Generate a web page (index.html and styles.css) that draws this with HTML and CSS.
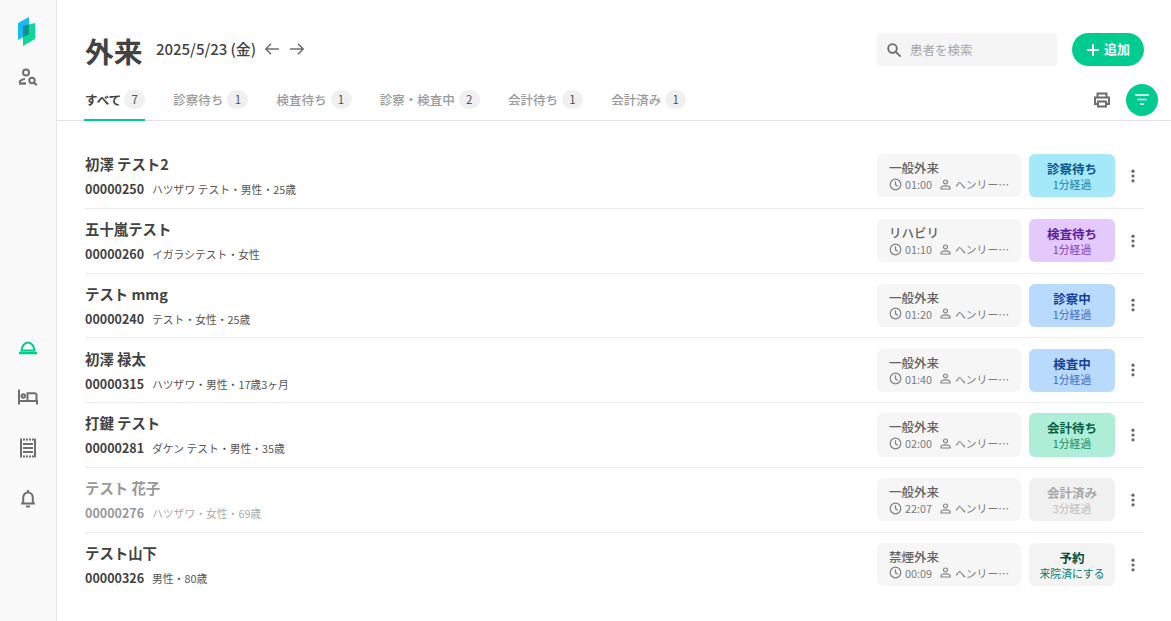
FILE: index.html
```html
<!DOCTYPE html>
<html lang="ja">
<head>
<meta charset="utf-8">
<title>外来</title>
<link rel="stylesheet" href="styles.css">
</head>
<body>
<svg width="0" height="0" class="defs">
  <defs>
    <symbol id="clock" viewBox="0 0 13 13"><circle cx="6.500" cy="6.500" r="5.300" fill="none" stroke="currentColor" stroke-width="1.200"/><path d="M6.500 3.300v3.500l2.400 1.400" fill="none" stroke="currentColor" stroke-width="1.200"/></symbol>
    <symbol id="person" viewBox="0 0 13 13"><circle cx="6.500" cy="4" r="2" fill="none" stroke="currentColor" stroke-width="1.200"/><path d="M2 11V9.900c0-1.300 2.500-2 4.500-2s4.500.7 4.500 2V11z" fill="none" stroke="currentColor" stroke-width="1.200"/></symbol>
    <symbol id="dots" viewBox="0 0 4 14"><circle cx="2" cy="2.200" r="1.600"/><circle cx="2" cy="7" r="1.600"/><circle cx="2" cy="11.800" r="1.600"/></symbol>
  </defs>
</svg>
<div class="app">
  <aside class="side">
    <svg class="logo" width="20" height="30" viewBox="0 0 20 30">
      <path d="M1 6 12 0v17L1 23z" fill="#18b9f5"/>
      <path d="M6 9 18 6v16L6 29z" fill="#0fd69b"/>
      <path d="M6 9 12 7.500V17L6 20.300z" fill="#0c9487"/>
    </svg>
    <svg class="nav-icon" width="20" height="20" viewBox="0 0 20 20" fill="none" stroke="#6f6f6f" stroke-width="2">
      <circle cx="8" cy="5.500" r="3"/>
      <path d="M1.500 15.500c0-1.800 3-3.300 5.500-3.500"/>
      <path d="M1 16.500h7" stroke-width="2.400"/>
      <circle cx="14" cy="13.500" r="2.700"/>
      <path d="m16 15.500 2.700 2.700"/>
    </svg>
    <div class="side-bottom">
      <svg class="nav-icon" width="20" height="20" viewBox="0 0 20 20" fill="none" stroke="#00cc90" stroke-width="2">
        <path d="M3.500 13.500c.4-4.400 3-8 6.500-8s6.100 3.600 6.500 8z"/>
        <path d="M1 16h18" stroke-width="2.600"/>
      </svg>
      <svg class="nav-icon" width="20" height="20" viewBox="0 0 20 20" fill="none" stroke="#6f6f6f" stroke-width="2">
        <path d="M1 2.500v15M1 14h18v3.500M18.500 14V8a1.800 1.800 0 0 0-1.800-1.800H9.500V14"/>
        <circle cx="5.300" cy="9" r="1.700"/>
      </svg>
      <svg class="nav-icon" width="20" height="20" viewBox="0 0 20 20" fill="none" stroke="#6f6f6f" stroke-width="2">
        <path d="M3 1v18M17 1v18"/>
        <path d="M2 1.500h16M2 18.500h16" stroke-dasharray="2 1"/>
        <path d="M5 6h10M5 10h10M5 14h10"/>
      </svg>
      <svg class="nav-icon" width="20" height="20" viewBox="0 0 20 20" fill="none" stroke="#6f6f6f" stroke-width="2">
        <path d="M3 15.500h14M5.200 15.500V9.500c0-2.800 1.900-4.900 4.800-4.900s4.800 2.100 4.800 4.900v6M10 2v2.600"/>
        <path d="M8 18.500h4"/>
      </svg>
    </div>
  </aside>
  <main class="main">
    <header class="top">
      <h1 class="title">外来</h1>
      <span class="date">2025/5/23 (金)</span>
      <svg class="arrow" width="16" height="16" viewBox="0 0 16 16" fill="none" stroke="#6f6f6f" stroke-width="1.500"><path d="M15 8H2M7 2.800 1.800 8 7 13.200"/></svg>
      <svg class="arrow" width="16" height="16" viewBox="0 0 16 16" fill="none" stroke="#6f6f6f" stroke-width="1.500"><path d="M1 8h13M9 2.800 14.200 8 9 13.200"/></svg>
      <div class="search">
        <svg width="16" height="16" viewBox="0 0 16 16" fill="none" stroke="#6a6a6a" stroke-width="1.800"><circle cx="6.500" cy="6.500" r="4.300"/><path d="m9.800 9.800 4.800 4.800"/></svg>
        <span class="placeholder">患者を検索</span>
      </div>
      <button class="add"><svg width="14" height="14" viewBox="0 0 14 14" stroke="#fff" stroke-width="2"><path d="M7 1v12M1 7h12"/></svg><span class="add-label">追加</span></button>
    </header>
    <nav class="tabs">
      <a class="tab active">すべて<span class="count">7</span></a>
      <a class="tab">診察待ち<span class="count">1</span></a>
      <a class="tab">検査待ち<span class="count">1</span></a>
      <a class="tab">診察・検査中<span class="count">2</span></a>
      <a class="tab">会計待ち<span class="count">1</span></a>
      <a class="tab">会計済み<span class="count">1</span></a>
      <div class="tab-tools">
        <svg width="18" height="18" viewBox="0 0 18 18" fill="none" stroke="#6a6a6a" stroke-width="1.900"><path d="M4.500 6V2.500h9V6M4.500 13H2V6.500h14V13h-2.500"/><path d="M5 10.500h8v5H5z"/></svg>
        <button class="filter"><svg width="14" height="11" viewBox="0 0 14 11" stroke="#fff" stroke-width="1.700"><path d="M0 1h14M2.500 5.500h9M5 10h4"/></svg></button>
      </div>
    </nav>
    <section class="list">
      <article class="row">
        <div class="who"><div class="name">初澤 テスト2</div><div class="meta"><b>00000250</b><span>ハツザワ テスト・男性・25歳</span></div></div>
        <div class="visit"><div class="visit-name">一般外来</div><div class="visit-info"><svg class="ic"><use href="#clock"/></svg><span class="time">01:00</span><svg class="ic"><use href="#person"/></svg><span>ヘンリー…</span></div></div>
        <div class="status s-exam"><strong>診察待ち</strong><small>1分経過</small></div>
        <svg class="dots"><use href="#dots"/></svg>
      </article>
      <article class="row">
        <div class="who"><div class="name">五十嵐テスト</div><div class="meta"><b>00000260</b><span>イガラシテスト・女性</span></div></div>
        <div class="visit"><div class="visit-name">リハビリ</div><div class="visit-info"><svg class="ic"><use href="#clock"/></svg><span class="time">01:10</span><svg class="ic"><use href="#person"/></svg><span>ヘンリー…</span></div></div>
        <div class="status s-test"><strong>検査待ち</strong><small>1分経過</small></div>
        <svg class="dots"><use href="#dots"/></svg>
      </article>
      <article class="row">
        <div class="who"><div class="name">テスト mmg</div><div class="meta"><b>00000240</b><span>テスト・女性・25歳</span></div></div>
        <div class="visit"><div class="visit-name">一般外来</div><div class="visit-info"><svg class="ic"><use href="#clock"/></svg><span class="time">01:20</span><svg class="ic"><use href="#person"/></svg><span>ヘンリー…</span></div></div>
        <div class="status s-busy"><strong>診察中</strong><small>1分経過</small></div>
        <svg class="dots"><use href="#dots"/></svg>
      </article>
      <article class="row">
        <div class="who"><div class="name">初澤 禄太</div><div class="meta"><b>00000315</b><span>ハツザワ・男性・17歳3ヶ月</span></div></div>
        <div class="visit"><div class="visit-name">一般外来</div><div class="visit-info"><svg class="ic"><use href="#clock"/></svg><span class="time">01:40</span><svg class="ic"><use href="#person"/></svg><span>ヘンリー…</span></div></div>
        <div class="status s-busy"><strong>検査中</strong><small>1分経過</small></div>
        <svg class="dots"><use href="#dots"/></svg>
      </article>
      <article class="row">
        <div class="who"><div class="name">打鍵 テスト</div><div class="meta"><b>00000281</b><span>ダケン テスト・男性・35歳</span></div></div>
        <div class="visit"><div class="visit-name">一般外来</div><div class="visit-info"><svg class="ic"><use href="#clock"/></svg><span class="time">02:00</span><svg class="ic"><use href="#person"/></svg><span>ヘンリー…</span></div></div>
        <div class="status s-pay"><strong>会計待ち</strong><small>1分経過</small></div>
        <svg class="dots"><use href="#dots"/></svg>
      </article>
      <article class="row done">
        <div class="who"><div class="name">テスト 花子</div><div class="meta"><b>00000276</b><span>ハツザワ・女性・69歳</span></div></div>
        <div class="visit"><div class="visit-name">一般外来</div><div class="visit-info"><svg class="ic"><use href="#clock"/></svg><span class="time">22:07</span><svg class="ic"><use href="#person"/></svg><span>ヘンリー…</span></div></div>
        <div class="status s-done"><strong>会計済み</strong><small>3分経過</small></div>
        <svg class="dots"><use href="#dots"/></svg>
      </article>
      <article class="row">
        <div class="who"><div class="name">テスト山下</div><div class="meta"><b>00000326</b><span>男性・80歳</span></div></div>
        <div class="visit"><div class="visit-name">禁煙外来</div><div class="visit-info"><svg class="ic"><use href="#clock"/></svg><span class="time">00:09</span><svg class="ic"><use href="#person"/></svg><span>ヘンリー…</span></div></div>
        <div class="status s-resv"><strong>予約</strong><small>来院済にする</small></div>
        <svg class="dots"><use href="#dots"/></svg>
      </article>
    </section>
  </main>
</div>
</body>
</html>
```
FILE: styles.css
```css
* { box-sizing: border-box; }
html, body { margin: 0; height: 100%; overflow: hidden; }
body {
  font-family: "Noto Sans CJK JP", "Noto Sans", sans-serif;
  color: #424242;
  background: #fff;
}
.defs { position: absolute; }
.app { display: flex; height: 621px; }

.side {
  width: 57px;
  flex: none;
  background: #f9f9f9;
  border-right: 1px solid #e6e6e6;
  display: flex;
  flex-direction: column;
  align-items: center;
  padding-top: 17px;
}
.logo { margin-right: 2px; }
.nav-icon { display: block; }
.logo + .nav-icon { margin-top: 20px; margin-right: 1px; }
.side-bottom {
  margin-top: 250px;
  display: flex;
  flex-direction: column;
  align-items: center;
  gap: 30.300px;
  margin-right: 1px;
}

.main { flex: 1; min-width: 0; }
.top {
  display: flex;
  align-items: center;
  height: 33px;
  margin: 33px 27px 0 28px;
}
.title { margin: 1px 13.500px 0 0; font-size: 28.800px; font-weight: 700; line-height: 33px; color: #424242; }
.date { font-size: 15px; font-weight: 500; margin: 0 8px 2px 0; white-space: nowrap; letter-spacing: -.05px; }
.arrow { margin: 0 9px 2px 0; }
.search {
  margin-left: auto;
  width: 180px;
  height: 33px;
  background: #f5f5f5;
  border-radius: 4px;
  display: flex;
  align-items: center;
  gap: 8px;
  padding-left: 9px;
}
.placeholder { font-size: 12.500px; color: #a6a6a6; padding-bottom: 1px; }
.add {
  margin-left: 15px;
  width: 72px;
  height: 33px;
  border: 0;
  border-radius: 17px;
  background: #00cc90;
  color: #fff;
  font: 700 13px "Noto Sans CJK JP", sans-serif;
  display: flex;
  align-items: center;
  justify-content: center;
  gap: 4px;
  padding: 0;
}
.add-label { padding-bottom: 2px; }

.tabs {
  display: flex;
  align-items: stretch;
  height: 39px;
  margin-top: 16px;
  padding: 0 13px 0 28px;
  border-bottom: 1px solid #e2e2e2;
}
.tab {
  display: flex;
  align-items: center;
  gap: 4px;
  font-size: 12.500px;
  font-weight: 500;
  color: #9a9a9a;
  margin-right: 28.200px;
  padding-bottom: 4px;
  white-space: nowrap;
}
.tab.active { color: #424242; font-weight: 700; gap: 3px; border-bottom: 2px solid #00cc90; margin-bottom: -1px; padding-bottom: 3px; margin-left: -1px; padding-left: 1px; }
.count {
  width: 21px;
  height: 19px;
  border-radius: 10px;
  background: #f0f0f0;
  color: #505060;
  font-size: 11.500px;
  font-weight: 400;
  display: flex;
  align-items: center;
  justify-content: center;
}
.tab-tools {
  margin-left: auto;
  display: flex;
  align-items: center;
  gap: 15px;
  padding-bottom: 3px;
}
.filter {
  width: 32px;
  height: 32px;
  border: 0;
  padding: 0;
  border-radius: 50%;
  background: #00cc90;
  display: flex;
  align-items: center;
  justify-content: center;
}

.list { padding: 23px 27px 0 28px; }
.row {
  height: 64.800px;
  display: flex;
  align-items: center;
  border-bottom: 1px solid #ececec;
  padding-bottom: .2px;
}
.row:last-child { border-bottom-color: transparent; }
.who { flex: 1; min-width: 0; padding-bottom: .4px; }
.name { font-size: 14.400px; font-weight: 700; line-height: 22px; color: #424242; }
.meta { display: flex; align-items: baseline; gap: 8px; margin-top: 5px; line-height: 18px; }
.meta b { font-size: 12.500px; font-weight: 700; }
.meta span { font-size: 10.800px; color: #555; }
.visit {
  width: 144px;
  height: 43.200px;
  border-radius: 6px;
  background: #f6f6f6;
  padding: 5px 0 0 12px;
}
.visit-name { font-size: 12.500px; font-weight: 500; line-height: 18px; color: #626262; }
.visit-info { display: flex; align-items: center; font-size: 10.800px; line-height: 14px; color: #7a7a7a; }
.ic { width: 13px; height: 13px; flex: none; margin-right: 3px; color: #808080; }
.time { width: 34px; }
.status {
  width: 86px;
  height: 43.200px;
  margin-left: 8px;
  border-radius: 6px;
  display: flex;
  flex-direction: column;
  align-items: center;
  justify-content: center;
}
.status strong { font-size: 12.500px; font-weight: 700; line-height: 18px; }
.status small { font-size: 10.800px; line-height: 13px; }
.s-exam { background: #a3e9fa; } .s-exam strong { color: #05568f; } .s-exam small { color: #1a7db0; }
.s-test { background: #e3c9fd; } .s-test strong { color: #5a1fa0; } .s-test small { color: #7c3fc0; }
.s-busy { background: #b8dbfd; } .s-busy strong { color: #163f9c; } .s-busy small { color: #3c6cc8; }
.s-pay { background: #aeeed6; } .s-pay strong { color: #065f46; } .s-pay small { color: #148a68; }
.s-done { background: #f1f1f1; } .s-done strong { color: #a8a8a8; } .s-done small { color: #bbb; }
.s-resv { background: #f3f3f3; } .s-resv strong { color: #064e3b; } .s-resv small { color: #0a7a6a; }
.dots { width: 4px; height: 14px; margin: 0 9px 0 16px; fill: #666; }
.done .name, .done .meta b { color: #999; }
.done .meta span { color: #aaa; }
```
